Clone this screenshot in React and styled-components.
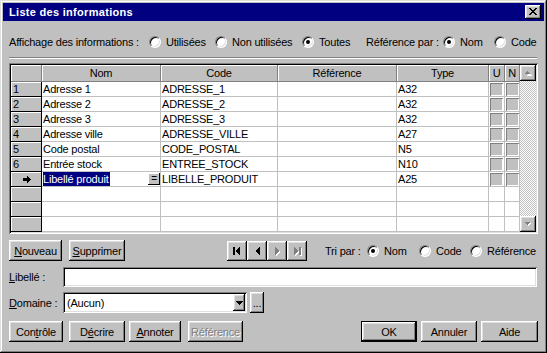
import React from 'react';
import styled, { createGlobalStyle, css } from 'styled-components';

const Global = createGlobalStyle`
  html, body { margin: 0; padding: 0; background: #c0c0c0; }
  body { font-family: 'Liberation Sans', Arial, sans-serif; font-size: 11px; color: #000; }
  * { box-sizing: border-box; }
`;

const raised = css`
  box-shadow: inset -1px -1px #000, inset 1px 1px #fff, inset -2px -2px #808080, inset 2px 2px #dfdfdf;
`;
const sunken = css`
  box-shadow: inset 1px 1px #808080, inset -1px -1px #fff, inset 2px 2px #000, inset -2px -2px #dfdfdf;
`;

const Window = styled.div`
  width: 547px;
  height: 353px;
  padding: 3px;
  background: #c0c0c0;
  box-shadow: inset -1px -1px #000, inset 1px 1px #dfdfdf, inset -2px -2px #808080, inset 2px 2px #fff;
  display: flex;
  flex-direction: column;
  letter-spacing: -0.2px;
`;

const TitleBar = styled.div`
  height: 18px;
  background: #000080;
  color: #fff;
  display: flex;
  align-items: center;
  justify-content: space-between;
  padding: 0 3px 0 6px;
  flex: none;
`;

const Title = styled.span`
  font-weight: bold;
  font-size: 11px;
  letter-spacing: 0.3px;
`;

const CloseButton = styled.div`
  width: 16px;
  height: 14px;
  background: #c0c0c0;
  ${raised};
  display: flex;
  align-items: center;
  justify-content: center;
  padding-bottom: 1px;
`;

const Body = styled.div`
  flex: 1;
  padding: 0 6px;
  display: flex;
  flex-direction: column;
`;

const OptionsRow = styled.div`
  margin-top: 13px;
  height: 16px;
  display: flex;
  align-items: center;
  flex: none;
`;

const Label = styled.span`
  width: ${(p) => p.$w}px;
  flex: none;
  white-space: nowrap;
  margin-left: ${(p) => p.$ml || 0}px;
`;

const RadioWrap = styled.label`
  display: flex;
  align-items: center;
  gap: 5px;
  width: ${(p) => (p.$w ? `${p.$w}px` : 'auto')};
  flex: none;
  white-space: nowrap;
`;

const RadioDot = styled.span`
  position: relative;
  width: 12px;
  height: 12px;
  border-radius: 50%;
  background: #fff;
  flex: none;
  border: 1px solid;
  border-color: #808080 #fff #fff #808080;
  box-shadow: inset 1px 1px #000, inset -1px -1px #dfdfdf;
  ${(p) =>
    p.$on &&
    css`
      &::after {
        content: '';
        position: absolute;
        left: 3px;
        top: 3px;
        width: 4px;
        height: 4px;
        border-radius: 50%;
        background: #000;
      }
    `}
`;

const Radio = ({ w, on, children }) => (
  <RadioWrap $w={w}>
    <RadioDot $on={on} />
    <span>{children}</span>
  </RadioWrap>
);

const Separator = styled.div`
  margin-top: 7px;
  height: 2px;
  border-top: 1px solid #808080;
  border-bottom: 1px solid #fff;
  margin-right: 1px;
  flex: none;
`;

const GridFrame = styled.div`
  margin-top: 4px;
  height: 171px;
  padding: 2px;
  ${sunken};
  display: flex;
  flex: none;
`;

const Table = styled.div`
  flex: 1;
  display: grid;
  grid-template-columns: 31px 119px 117px 119px 92px 16px 15px;
  grid-template-rows: 17px;
  grid-auto-rows: 15px;
  background: #fff;
`;

const HeadCell = styled.div`
  background: #c0c0c0;
  box-shadow: inset 1px 1px #fff;
  border-right: 1px solid #808080;
  border-bottom: 1px solid #808080;
  display: flex;
  align-items: center;
  justify-content: center;
  white-space: nowrap;
  overflow: hidden;
`;

const RowHead = styled.div`
  background: #c0c0c0;
  box-shadow: inset 1px 1px #fff;
  border-right: 1px solid #000;
  border-bottom: 1px solid #000;
  display: flex;
  align-items: center;
  justify-content: ${(p) => (p.$center ? 'center' : 'flex-start')};
  padding-left: 2px;
`;

const Cell = styled.div`
  border-right: 1px solid #c0c0c0;
  border-bottom: 1px solid #c0c0c0;
  display: flex;
  align-items: center;
  white-space: nowrap;
  overflow: hidden;
  padding-left: ${(p) => (p.$box ? 1 : 1)}px;
`;

const Selected = styled.span`
  background: #000080;
  color: #fff;
  line-height: 14px;
  padding-right: 1px;
`;

const EqButton = styled.span`
  margin-left: auto;
  margin-right: 0px;
  width: 12px;
  height: 12px;
  background: #c0c0c0;
  box-shadow: inset -1px -1px #000, inset 1px 1px #fff, inset 0 0 0 1px #404040;
  display: flex;
  align-items: center;
  justify-content: center;
  font-size: 10px;
  line-height: 1;
`;

const CheckBox = styled.span`
  width: 13px;
  height: 13px;
  background: #c0c0c0;
  box-shadow: inset 1px 1px #808080, inset -1px -1px #fff;
`;

const ScrollBar = styled.div`
  width: 16px;
  display: flex;
  flex-direction: column;
  background: repeating-conic-gradient(#c0c0c0 0 25%, #fff 0 50%) 0 0 / 2px 2px;
`;

const ScrollButton = styled.div`
  width: 16px;
  height: 16px;
  background: #c0c0c0;
  ${raised};
  display: flex;
  align-items: center;
  justify-content: center;
  margin-top: ${(p) => (p.$bottom ? 'auto' : '0')};
`;

const ButtonRow = styled.div`
  margin-top: 6px;
  height: 21px;
  display: flex;
  align-items: center;
  flex: none;
`;

const Button = styled.button`
  font: inherit;
  letter-spacing: inherit;
  color: #000;
  height: ${(p) => p.$h || 21}px;
  width: ${(p) => p.$w}px;
  margin-left: ${(p) => p.$ml || 0}px;
  padding: 0;
  border: none;
  background: #c0c0c0;
  ${raised};
  display: flex;
  align-items: center;
  justify-content: center;
  flex: none;
  ${(p) =>
    p.disabled &&
    css`
      color: #808080;
      text-shadow: 1px 1px #fff;
    `}
  ${(p) =>
    p.$default &&
    css`
      box-shadow: inset 0 0 0 1px #000, inset -2px -2px #000, inset 2px 2px #fff, inset -3px -3px #808080,
        inset 3px 3px #dfdfdf;
    `}
`;

const NavGroup = styled.div`
  display: flex;
  margin-left: 102px;
`;

const NavButton = styled(Button)`
  width: 20px;
  height: 20px;
`;

const FormRow = styled.div`
  margin-top: ${(p) => p.$mt}px;
  height: ${(p) => p.$h}px;
  display: flex;
  align-items: center;
  flex: none;
`;

const TextField = styled.div`
  flex: 1;
  height: 100%;
  background: #fff;
  ${sunken};
  margin-right: 1px;
`;

const Combo = styled.div`
  width: 184px;
  height: 100%;
  background: #fff;
  ${sunken};
  display: flex;
  align-items: center;
  padding: 2px;
`;

const ComboText = styled.span`
  flex: 1;
  padding-left: 2px;
`;

const ComboButton = styled.div`
  width: 12px;
  height: 17px;
  background: #c0c0c0;
  ${raised};
  display: flex;
  align-items: center;
  justify-content: center;
`;

const Footer = styled.div`
  margin-top: 8px;
  height: 21px;
  display: flex;
  align-items: center;
  flex: none;
`;

const Spacer = styled.div`
  flex: 1;
`;

const CloseGlyph = () => (
  <svg width="8" height="7" viewBox="0 0 8 7" shapeRendering="crispEdges">
    <path
      fill="#000"
      d="M0 0h2v1H0zM6 0h2v1H6zM1 1h2v1H1zM5 1h2v1H5zM2 2h4v1H2zM3 3h2v1H3zM2 4h4v1H2zM1 5h2v1H1zM5 5h2v1H5zM0 6h2v1H0zM6 6h2v1H6z"
    />
  </svg>
);

const RowArrow = () => (
  <svg width="9" height="7" viewBox="0 0 9 7" shapeRendering="crispEdges">
    <path fill="#000" d="M0 2h4V0h1v1h1v1h1v1h1v1H7v1H6v1H5v1H4V5H0z" />
  </svg>
);

const Tri = ({ dir, disabled }) => {
  const shapes = {
    up: 'M4 5h7v-1h-1v-1h-1v-1h-1v-1h-1v1h-1v1h-1v1h-1z',
  };
  return null;
};

const ScrollArrow = ({ up }) => (
  <svg width="8" height="6" viewBox="0 0 8 6" shapeRendering="crispEdges">
    {up ? (
      <>
        <path fill="#fff" d="M2 5h5V4H6V3H5V2H4v1H3v1H2z" transform="translate(1,1)" />
        <path fill="#808080" d="M1 4h5V3H5V2H4V1H3v1H2v1H1z" />
      </>
    ) : (
      <>
        <path fill="#fff" d="M1 1h5v1H5v1H4v1H3V3H2V2H1z" transform="translate(1,1)" />
        <path fill="#808080" d="M1 1h5v1H5v1H4v1H3V3H2V2H1z" />
      </>
    )}
  </svg>
);

const NavIcon = ({ kind }) => {
  const paths = {
    first: 'M4 1h2v8H4zM10 1h1v8h-1V8H9V7H8V6H7V4h1V3h1V2h1z',
    prev: 'M10 1h1v8h-1V8H9V7H8V6H7V4h1V3h1V2h1z',
    next: 'M6 1h1v1h1v1h1v1h1v2H9v1H8v1H7v1H6z',
    last: 'M5 1h1v1h1v1h1v1h1v2H8v1H7v1H6v1H5zM10 1h2v8h-2z',
  };
  const disabled = kind === 'next' || kind === 'last';
  return (
    <svg width="16" height="10" viewBox="0 0 16 10" shapeRendering="crispEdges">
      {disabled && <path fill="#fff" d={paths[kind]} transform="translate(1,1)" />}
      <path fill={disabled ? '#808080' : '#000'} d={paths[kind]} />
    </svg>
  );
};

const DownGlyph = () => (
  <svg width="7" height="4" viewBox="0 0 7 4" shapeRendering="crispEdges">
    <path fill="#000" d="M0 0h7v1H6v1H5v1H4v1H3V3H2V2H1V1H0z" />
  </svg>
);

const rows = [
  { n: '1', nom: 'Adresse 1', code: 'ADRESSE_1', type: 'A32' },
  { n: '2', nom: 'Adresse 2', code: 'ADRESSE_2', type: 'A32' },
  { n: '3', nom: 'Adresse 3', code: 'ADRESSE_3', type: 'A32' },
  { n: '4', nom: 'Adresse ville', code: 'ADRESSE_VILLE', type: 'A27' },
  { n: '5', nom: 'Code postal', code: 'CODE_POSTAL', type: 'N5' },
  { n: '6', nom: 'Entrée stock', code: 'ENTREE_STOCK', type: 'N10' },
  { current: true, nom: 'Libellé produit', code: 'LIBELLE_PRODUIT', type: 'A25' },
  { empty: true },
  { empty: true },
  { empty: true },
];

export default function App() {
  return (
    <>
      <Global />
      <Window>
        <TitleBar>
          <Title>Liste des informations</Title>
          <CloseButton>
            <CloseGlyph />
          </CloseButton>
        </TitleBar>
        <Body>
          <OptionsRow>
            <Label $w={140}>Affichage des informations :</Label>
            <Radio w={66}>Utilisées</Radio>
            <Radio w={87}>Non utilisées</Radio>
            <Radio w={64} on>
              Toutes
            </Radio>
            <Label $w={77}>Référence par :</Label>
            <Radio w={51} on>
              Nom
            </Radio>
            <Radio>Code</Radio>
          </OptionsRow>
          <Separator />
          <GridFrame>
            <Table>
              <HeadCell />
              <HeadCell>Nom</HeadCell>
              <HeadCell>Code</HeadCell>
              <HeadCell>Référence</HeadCell>
              <HeadCell>Type</HeadCell>
              <HeadCell>U</HeadCell>
              <HeadCell>N</HeadCell>
              {rows.map((r, i) => (
                <React.Fragment key={i}>
                  <RowHead $center={r.current}>{r.current ? <RowArrow /> : r.n}</RowHead>
                  <Cell>
                    {r.current ? (
                      <>
                        <Selected>{r.nom}</Selected>
                        <EqButton>=</EqButton>
                      </>
                    ) : (
                      r.nom
                    )}
                  </Cell>
                  <Cell>{r.code}</Cell>
                  <Cell />
                  <Cell>{r.type}</Cell>
                  <Cell $box>{!r.empty && <CheckBox />}</Cell>
                  <Cell $box>{!r.empty && <CheckBox />}</Cell>
                </React.Fragment>
              ))}
            </Table>
            <ScrollBar>
              <ScrollButton>
                <ScrollArrow up />
              </ScrollButton>
              <ScrollButton $bottom>
                <ScrollArrow />
              </ScrollButton>
            </ScrollBar>
          </GridFrame>
          <ButtonRow>
            <Button $w={53}>
              <span>
                <u>N</u>ouveau
              </span>
            </Button>
            <Button $w={56} $ml={7}>
              <span>
                <u>S</u>upprimer
              </span>
            </Button>
            <NavGroup>
              <NavButton>
                <NavIcon kind="first" />
              </NavButton>
              <NavButton>
                <NavIcon kind="prev" />
              </NavButton>
              <NavButton>
                <NavIcon kind="next" />
              </NavButton>
              <NavButton>
                <NavIcon kind="last" />
              </NavButton>
            </NavGroup>
            <Label $w={42} $ml={18}>
              Tri par :
            </Label>
            <Radio w={52} on>
              Nom
            </Radio>
            <Radio w={51}>Code</Radio>
            <Radio>Référence</Radio>
          </ButtonRow>
          <FormRow $mt={6} $h={20}>
            <Label $w={54}>
              <u>L</u>ibellé :
            </Label>
            <TextField />
          </FormRow>
          <FormRow $mt={5} $h={21}>
            <Label $w={54}>
              <u>D</u>omaine :
            </Label>
            <Combo>
              <ComboText>(Aucun)</ComboText>
              <ComboButton>
                <DownGlyph />
              </ComboButton>
            </Combo>
            <Button $w={14} $ml={3}>
              ...
            </Button>
          </FormRow>
          <Footer>
            <Button $w={54}>
              <span>
                Con<u>t</u>rôle
              </span>
            </Button>
            <Button $w={56} $ml={6}>
              <span>
                D<u>é</u>crire
              </span>
            </Button>
            <Button $w={52} $ml={4}>
              <span>
                <u>A</u>nnoter
              </span>
            </Button>
            <Button $w={55} $ml={7} disabled>
              Référence
            </Button>
            <Spacer />
            <Button $w={56} $default>
              OK
            </Button>
            <Button $w={56} $ml={4}>
              Annuler
            </Button>
            <Button $w={57} $ml={4}>
              Aide
            </Button>
          </Footer>
        </Body>
      </Window>
    </>
  );
}
